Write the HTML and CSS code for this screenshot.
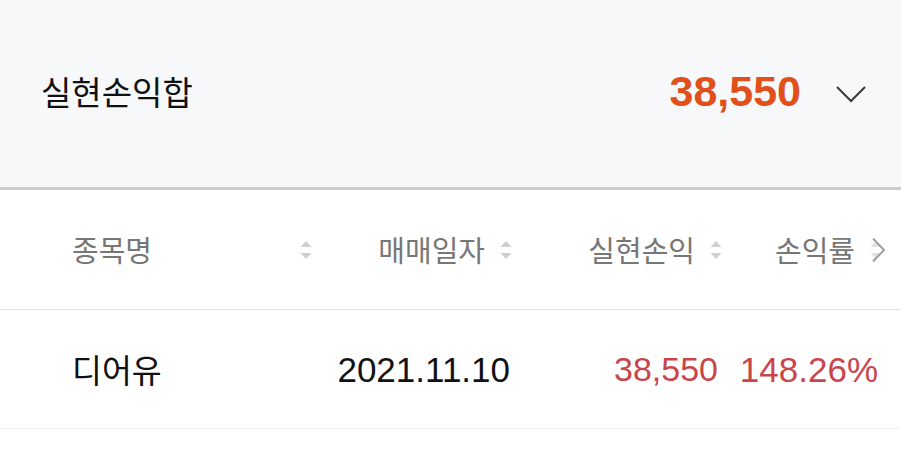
FILE: index.html
```html
<!DOCTYPE html>
<html lang="ko">
<head>
<meta charset="utf-8">
<title>실현손익합</title>
<link rel="stylesheet" href="styles.css">
</head>
<body>
<div class="summary">
  <div class="summary-label">실현손익합</div>
  <div class="summary-right">
    <span class="summary-value">38,550</span>
    <svg class="chev-down" width="32" height="18" viewBox="0 0 32 18"><path d="M2 2 L16 16 L30 2" fill="none" stroke="#3a3a3a" stroke-width="2"/></svg>
  </div>
</div>
<div class="table">
  <div class="row head">
    <div class="cell c1"><span>종목명</span><svg class="sort" width="12" height="20" viewBox="0 0 12 20"><path d="M6 1 L11.5 7 L0.5 7 Z M6 19 L11.5 13 L0.5 13 Z" fill="#cfcfcf"/></svg></div>
    <div class="cell"><span>매매일자</span><svg class="sort" width="12" height="20" viewBox="0 0 12 20"><path d="M6 1 L11.5 7 L0.5 7 Z M6 19 L11.5 13 L0.5 13 Z" fill="#cfcfcf"/></svg></div>
    <div class="cell"><span>실현손익</span><svg class="sort" width="12" height="20" viewBox="0 0 12 20"><path d="M6 1 L11.5 7 L0.5 7 Z M6 19 L11.5 13 L0.5 13 Z" fill="#cfcfcf"/></svg></div>
    <div class="cell"><span>손익률</span><svg class="sort more" width="16" height="26" viewBox="0 0 16 26"><path d="M6 4 L11.5 10 L0.5 10 Z M6 22 L11.5 16 L0.5 16 Z" fill="#e2e2e2"/><path d="M3 1.5 L14 13 L3 24.5" fill="none" stroke="#a0a0a0" stroke-width="2"/></svg></div>
  </div>
  <div class="row body">
    <div class="cell c1 name">디어유</div>
    <div class="cell date">2021.11.10</div>
    <div class="cell num red n3">38,550</div>
    <div class="cell num red n4">148.26%</div>
  </div>
</div>
</body>
</html>
```
FILE: styles.css
```css
* { box-sizing: border-box; }
html, body { margin: 0; padding: 0; background: #ffffff; }
body {
  font-family: "Liberation Sans", "Noto Sans CJK KR", sans-serif;
  width: 901px;
  height: 457px;
  overflow: hidden;
}
.summary {
  height: 190px;
  background: #f7f8fa;
  border-bottom: 3px solid #cdcdcd;
  display: flex;
  align-items: center;
  justify-content: space-between;
  padding: 0 34px 4px 41px;
}
.summary-label {
  font-family: "Noto Sans CJK KR", sans-serif;
  font-size: 33px;
  line-height: 1;
  color: #111111;
}
.summary-right {
  display: flex;
  align-items: center;
  gap: 34px;
}
.summary-value {
  font-size: 43px;
  font-weight: bold;
  color: #e1501b;
  line-height: 1;
}
.chev-down { display: block; margin-top: 4px; }
.table { padding: 0; }
.row {
  display: grid;
  grid-template-columns: 240px 200px 210px 162px;
  align-items: center;
  padding: 0 17px 0 72px;
}
.row.head { height: 120px; border-bottom: 1px solid #e4e4e4; }
.row.body { height: 119px; border-bottom: 1px solid #f1f1f1; }
.cell {
  display: flex;
  align-items: center;
  justify-content: flex-end;
  gap: 15px;
  line-height: 1;
}
.head .cell {
  font-family: "Noto Sans CJK KR", sans-serif;
  font-size: 29px;
  color: #777777;
}
.head .cell.c1 { justify-content: space-between; }
.sort { display: block; flex: none; }
.sort.more { margin-right: -2px; }
.body .cell.c1 {
  justify-content: flex-start;
  font-family: "Noto Sans CJK KR", sans-serif;
  font-size: 32.5px;
  color: #111111;
}
.body .cell.date { font-size: 35px; color: #111111; padding-right: 2px; }
.body .cell.num { font-size: 34px; }
.body .cell.n3 { padding-right: 4px; }
.body .cell.n4 { font-size: 35px; padding-right: 6px; }
.red { color: #c8454b; }
```
